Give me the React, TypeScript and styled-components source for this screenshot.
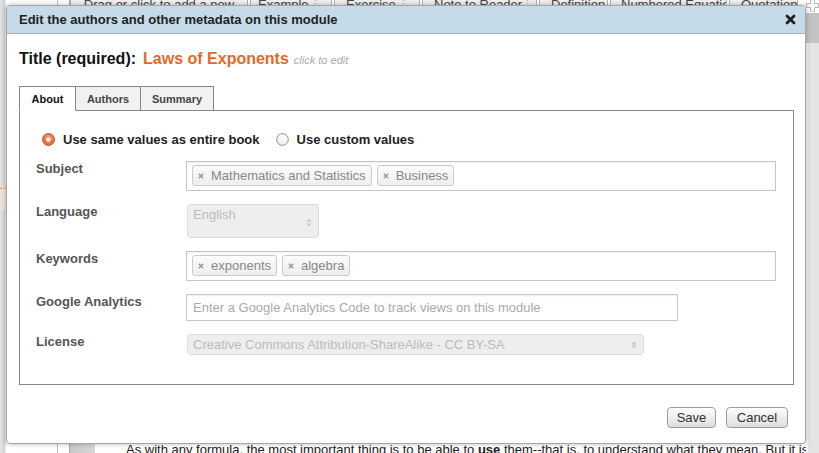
import React from "react";
import styled, { createGlobalStyle } from "styled-components";

const GlobalStyle = createGlobalStyle`
  html, body { margin: 0; padding: 0; background: #fff; }
  body { font-family: "Liberation Sans", Arial, sans-serif; }
  #root { position: relative; width: 819px; height: 453px; overflow: hidden; }
  *, *::before, *::after { box-sizing: border-box; }
`;

/* ---------- page behind the dialog ---------- */
const Page = styled.div`
  display: flex;
  width: 819px;
  height: 453px;
  background: #fff;
  color: #222;
`;

const LeftRail = styled.div`
  flex: 0 0 57px;
  background: linear-gradient(to right, #e4e4e4 0, #d2d2d2 5px, #fff 6px);
`;

const RailMark = styled.div`
  margin-top: 188px;
  width: 6px;
  height: 22px;
  background: #efe3d8;
  border-top: 1px dotted #e38d5c;
`;

const Gutter = styled.div`
  flex: 0 0 13px;
  border-left: 1px solid #bdbdbd;
  border-right: 1px solid #a8a8a8;
`;

const Main = styled.div`
  flex: 1;
  min-width: 0;
  display: flex;
  flex-direction: column;
  justify-content: space-between;
`;

const Toolbar = styled.div`
  display: flex;
  gap: 2px;
  margin-top: -10px;
`;

const ToolButton = styled.div<{ $w: number; $pad: number; $center?: boolean }>`
  flex: 0 0 ${(p) => p.$w}px;
  height: 24px;
  display: flex;
  align-items: flex-start;
  justify-content: ${(p) => (p.$center ? "center" : "space-between")};
  padding: 6px 10px 0 ${(p) => p.$pad}px;
  border: 1px solid #b3b3b3;
  background: linear-gradient(#f8f8f8, #e6e6e6);
  font-size: 13px;
  line-height: 15px;
  color: #444;
  white-space: nowrap;
  overflow: hidden;
`;

const Handle = styled.span`
  color: #aaa;
  font-size: 11px;
`;

const BottomRow = styled.div`
  display: flex;
  height: 12px;
`;

const GrayTab = styled.div`
  flex: 0 0 25px;
  background: linear-gradient(to right, #c9c9c9, #d6d6d6);
`;

const BodyText = styled.p`
  margin: 1px 0 0 31px;
  font-size: 13px;
  line-height: 16px;
  white-space: nowrap;
  color: #222;
`;

const ScrollCol = styled.div`
  flex: 0 0 13px;
  display: flex;
  flex-direction: column;
`;

const PlusSlot = styled.div`
  height: 13px;
  display: flex;
  align-items: flex-start;
  justify-content: center;
`;

const ScrollDark = styled.div`
  height: 30px;
  background: #c3c3c3;
`;

const ScrollTrack = styled.div`
  flex: 1;
  background: #e4e4e4;
  border-left: 2px solid #f4f4f4;
`;

/* ---------- dialog ---------- */
const Modal = styled.div`
  position: absolute;
  left: 6px;
  top: 5px;
  width: 800px;
  height: 439px;
  display: flex;
  flex-direction: column;
  background: #fff;
  border: 1px solid #a6a6a6;
  border-radius: 4px;
  box-shadow: 0 0 5px rgba(0, 0, 0, 0.28);
  overflow: hidden;
`;

const Header = styled.div`
  flex: 0 0 28px;
  display: flex;
  align-items: center;
  justify-content: space-between;
  padding: 0 9px 0 12px;
  background: #c5dbe9;
  border-bottom: 1px solid #a9b3ba;
`;

const HeaderTitle = styled.h1`
  margin: 0;
  font-size: 13px;
  font-weight: bold;
  color: #222;
`;

const CloseButton = styled.button`
  display: flex;
  padding: 0;
  border: 0;
  background: none;
  cursor: pointer;
`;

const Body = styled.div`
  flex: 1;
  display: flex;
  flex-direction: column;
  padding: 15px 11px 0 12px;
`;

const TitleRow = styled.div`
  display: flex;
  align-items: baseline;
  height: 20px;
  line-height: 20px;
`;

const TitleLabel = styled.span`
  font-size: 16px;
  font-weight: bold;
  color: #111;
  margin-right: 7px;
`;

const TitleValue = styled.span`
  font-size: 16px;
  font-weight: bold;
  color: #e06a2b;
  margin-right: 5px;
`;

const ClickHint = styled.span`
  font-size: 11px;
  font-style: italic;
  color: #aaa;
`;

const Tabs = styled.div`
  display: flex;
  margin-top: 17px;
  margin-bottom: -1px;
`;

const Tab = styled.div<{ $active?: boolean; $w: number }>`
  position: relative;
  z-index: ${(p) => (p.$active ? 1 : 0)};
  width: ${(p) => p.$w}px;
  height: 25px;
  display: flex;
  align-items: center;
  justify-content: center;
  font-size: 11px;
  font-weight: bold;
  color: ${(p) => (p.$active ? "#111" : "#444")};
  background: ${(p) => (p.$active ? "#fff" : "#f1f1f1")};
  border: 1px solid #888;
  border-bottom-color: ${(p) => (p.$active ? "#fff" : "#888")};
  & + & {
    border-left: 0;
  }
`;

const Panel = styled.div`
  border: 1px solid #888;
  padding: 19px 17px 29px 16px;
`;

const RadioRow = styled.div`
  display: flex;
  align-items: center;
  height: 18px;
  margin: 0 0 13px 6px;
`;

const RadioOption = styled.label<{ $gap: number }>`
  display: flex;
  align-items: center;
  gap: 8px;
  margin-right: ${(p) => p.$gap}px;
  font-size: 13px;
  font-weight: bold;
  color: #222;
`;

const Fields = styled.div`
  display: flex;
  flex-direction: column;
  gap: 13px;
`;

const FieldRow = styled.div`
  display: grid;
  grid-template-columns: 150px 1fr;
  align-items: start;
`;

const FieldLabel = styled.div`
  margin-top: -1px;
  font-size: 13px;
  line-height: 18px;
  font-weight: bold;
  color: #555;
`;

const TagBox = styled.div`
  height: 30px;
  display: flex;
  gap: 5px;
  padding: 3px 5px 0;
  border: 1px solid #c6c6c6;
  box-shadow: inset 0 1px 2px rgba(0, 0, 0, 0.06);
  background: #fff;
`;

const Chip = styled.span`
  height: 21px;
  display: inline-flex;
  align-items: center;
  gap: 7px;
  padding: 0 5px;
  border: 1px solid #cbcbcb;
  border-radius: 3px;
  background: linear-gradient(#fcfcfc, #eeeeee);
  font-size: 13px;
  color: #888;
  white-space: nowrap;
`;

const SelectBox = styled.div<{ $w: number; $h: number; $top?: boolean }>`
  width: ${(p) => p.$w}px;
  height: ${(p) => p.$h}px;
  margin-left: 1px;
  display: flex;
  align-items: ${(p) => (p.$top ? "flex-start" : "center")};
  justify-content: space-between;
  padding: ${(p) => (p.$top ? "2px" : "0")} 6px 0 5px;
  background: #eeeeee;
  border: 1px solid #dcdcdc;
  border-radius: 4px;
  font-size: 13px;
  line-height: 16px;
  color: #bbb;
  white-space: nowrap;
`;

const Arrows = styled.span`
  align-self: center;
  display: flex;
`;

const TextInput = styled.div`
  width: 492px;
  height: 27px;
  display: flex;
  align-items: center;
  padding: 0 6px;
  border: 1px solid #c8c8c8;
  box-shadow: inset 0 1px 2px rgba(0, 0, 0, 0.06);
  font-size: 13px;
  color: #aaa;
  white-space: nowrap;
`;

const Footer = styled.div`
  display: flex;
  justify-content: flex-end;
  gap: 10px;
  margin-top: 22px;
  padding-right: 6px;
`;

const Button = styled.button<{ $w: number }>`
  width: ${(p) => p.$w}px;
  height: 21px;
  padding: 0;
  font-family: "Liberation Sans", Arial, sans-serif;
  font-size: 13px;
  color: #333;
  border: 1px solid #9d9d9d;
  border-radius: 4px;
  background: linear-gradient(#fdfdfd, #dedede);
  cursor: pointer;
`;

/* ---------- drawings ---------- */
const CloseIcon = () => (
  <svg width="11" height="11" viewBox="0 0 11 11">
    <path d="M2 2 L9 9 M9 2 L2 9" stroke="#1e1e1e" strokeWidth="2.8" strokeLinecap="round" />
  </svg>
);

const RemoveIcon = () => (
  <svg width="6" height="6" viewBox="0 0 6 6">
    <path d="M0.8 0.8 L5.2 5.2 M5.2 0.8 L0.8 5.2" stroke="#9a9a9a" strokeWidth="1.6" />
  </svg>
);

const RadioOn = () => (
  <svg width="13" height="13" viewBox="0 0 13 13">
    <defs>
      <radialGradient id="rg" cx="50%" cy="40%" r="60%">
        <stop offset="0" stopColor="#f6a47b" />
        <stop offset="1" stopColor="#e0622d" />
      </radialGradient>
    </defs>
    <circle cx="6.5" cy="6.5" r="6" fill="url(#rg)" stroke="#c9582a" strokeWidth="1" />
    <circle cx="6.5" cy="6.5" r="2.2" fill="#fff4ec" />
  </svg>
);

const RadioOff = () => (
  <svg width="13" height="13" viewBox="0 0 13 13">
    <defs>
      <linearGradient id="rw" x1="0" y1="0" x2="0" y2="1">
        <stop offset="0" stopColor="#ffffff" />
        <stop offset="1" stopColor="#ececec" />
      </linearGradient>
    </defs>
    <circle cx="6.5" cy="6.5" r="5.8" fill="url(#rw)" stroke="#8e8e8e" strokeWidth="1" />
  </svg>
);

const SpinArrows = ({ gap }: { gap: number }) => (
  <Arrows>
    <svg width="6" height={8 + gap} viewBox={`0 0 6 ${8 + gap}`}>
      <path d="M0.5 3.5 L3 0.8 L5.5 3.5 Z" fill="#c4c4c4" />
      <path d={`M0.5 ${4.5 + gap} L3 ${7.2 + gap} L5.5 ${4.5 + gap} Z`} fill="#c4c4c4" />
    </svg>
  </Arrows>
);

const PlusOutline = () => (
  <svg width="13" height="12" viewBox="0 0 13 12">
    <path
      d="M4.5 -1 H8.5 V3.5 H12.5 V7.5 H8.5 V12 H4.5 V7.5 H0.5 V3.5 H4.5 Z"
      fill="#f7f7f7"
      stroke="#b5b5b5"
      strokeWidth="1"
    />
  </svg>
);

const toolButtons = [
  { label: "Drag or click to add a new", w: 178, pad: 10, center: true, handle: false },
  { label: "Example", w: 82, pad: 7, handle: true },
  { label: "Exercise", w: 86, pad: 11, handle: true },
  { label: "Note to Reader", w: 115, pad: 11, handle: true },
  { label: "Definition", w: 69, pad: 11, handle: false },
  { label: "Numbered Equation", w: 117, pad: 10, handle: false },
  { label: "Quotation", w: 69, pad: 11, handle: false },
];

const tabs = [
  { label: "About", w: 57, active: true },
  { label: "Authors", w: 65 },
  { label: "Summary", w: 73 },
];

export default function App() {
  return (
    <>
      <GlobalStyle />
      <Page>
        <LeftRail>
          <RailMark />
        </LeftRail>
        <Gutter />
        <Main>
          <Toolbar>
            {toolButtons.map((b) => (
              <ToolButton key={b.label} $w={b.w} $pad={b.pad} $center={b.center}>
                <span>{b.label}</span>
                {b.handle && <Handle>⋮</Handle>}
              </ToolButton>
            ))}
          </Toolbar>
          <BottomRow>
            <GrayTab />
            <BodyText>
              As with any formula, the most important thing is to be able to <b>use</b> them--that
              is, to understand what they mean. But it is still important to know where they come from.
            </BodyText>
          </BottomRow>
        </Main>
        <ScrollCol>
          <PlusSlot>
            <PlusOutline />
          </PlusSlot>
          <ScrollDark />
          <ScrollTrack />
        </ScrollCol>
      </Page>

      <Modal role="dialog">
        <Header>
          <HeaderTitle>Edit the authors and other metadata on this module</HeaderTitle>
          <CloseButton aria-label="Close">
            <CloseIcon />
          </CloseButton>
        </Header>
        <Body>
          <TitleRow>
            <TitleLabel>Title (required):</TitleLabel>
            <TitleValue>Laws of Exponents</TitleValue>
            <ClickHint>click to edit</ClickHint>
          </TitleRow>

          <Tabs>
            {tabs.map((t) => (
              <Tab key={t.label} $w={t.w} $active={t.active}>
                {t.label}
              </Tab>
            ))}
          </Tabs>

          <Panel>
            <RadioRow>
              <RadioOption $gap={16}>
                <RadioOn />
                Use same values as entire book
              </RadioOption>
              <RadioOption $gap={0}>
                <RadioOff />
                Use custom values
              </RadioOption>
            </RadioRow>

            <Fields>
              <FieldRow>
                <FieldLabel>Subject</FieldLabel>
                <TagBox>
                  <Chip>
                    <RemoveIcon />
                    Mathematics and Statistics
                  </Chip>
                  <Chip>
                    <RemoveIcon />
                    Business
                  </Chip>
                </TagBox>
              </FieldRow>

              <FieldRow>
                <FieldLabel>Language</FieldLabel>
                <SelectBox $w={132} $h={34} $top>
                  <span>English</span>
                  <SpinArrows gap={1} />
                </SelectBox>
              </FieldRow>

              <FieldRow>
                <FieldLabel>Keywords</FieldLabel>
                <TagBox>
                  <Chip>
                    <RemoveIcon />
                    exponents
                  </Chip>
                  <Chip>
                    <RemoveIcon />
                    algebra
                  </Chip>
                </TagBox>
              </FieldRow>

              <FieldRow>
                <FieldLabel>Google Analytics</FieldLabel>
                <TextInput>Enter a Google Analytics Code to track views on this module</TextInput>
              </FieldRow>

              <FieldRow>
                <FieldLabel>License</FieldLabel>
                <SelectBox $w={457} $h={21}>
                  <span>Creative Commons Attribution-ShareAlike - CC BY-SA</span>
                  <SpinArrows gap={0} />
                </SelectBox>
              </FieldRow>
            </Fields>
          </Panel>

          <Footer>
            <Button $w={49}>Save</Button>
            <Button $w={62}>Cancel</Button>
          </Footer>
        </Body>
      </Modal>
    </>
  );
}
